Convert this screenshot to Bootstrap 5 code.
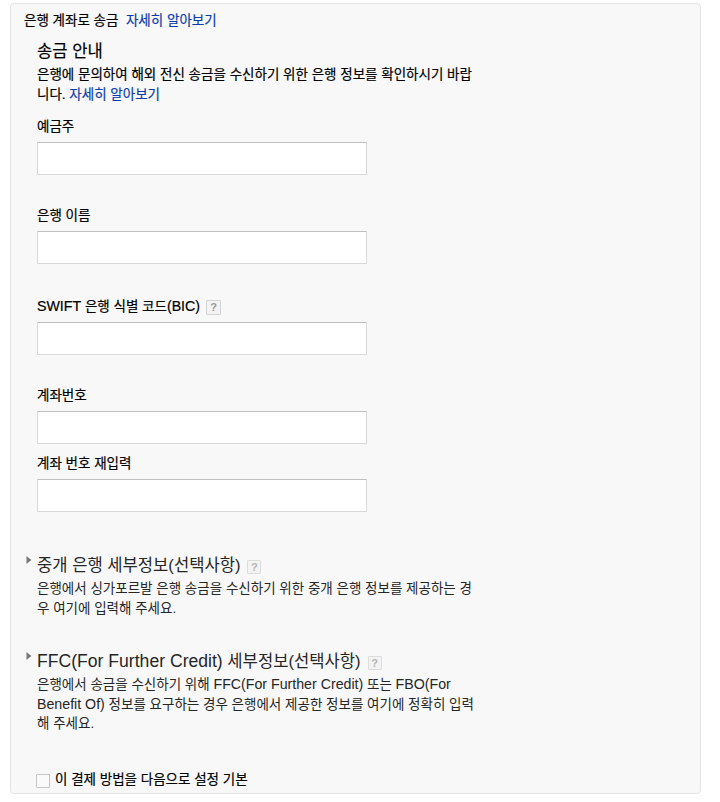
<!DOCTYPE html>
<html lang="ko">
<head>
<meta charset="utf-8">
<meta name="viewport" content="width=device-width, initial-scale=1">
<title>은행 계좌로 송금</title>
<link href="https://cdn.jsdelivr.net/npm/bootstrap@5.3.0/dist/css/bootstrap.min.css" rel="stylesheet">
<style>
body{background:#fff;color:#000;font-family:"Liberation Sans","Noto Sans CJK KR",sans-serif;font-size:13.5px;line-height:20px;-webkit-text-stroke:.2px}
.panel{margin:3px 19px 0 10px;height:791px;background:#f8f8f8;border:1px solid #e4e4e4;border-radius:4px;padding:7px 13px 0;white-space:nowrap}
.panel a{color:#0b3cae;text-decoration:none}
.inner{padding-left:13px}
.title{font-size:16.6px;line-height:22px;margin:0;font-weight:400;color:inherit}
.inner .title{margin-top:10px}
.intro{padding:2px 0 12px;margin:0}
.latin{font-size:14.2px;line-height:0}
.title .latin{font-size:17.6px}
.field{margin-bottom:31px}
.field label{display:flex;align-items:center;height:20px;margin-bottom:5px}
.field .form-control{width:329.5px;height:33px;border:1px solid #d9d9d9;border-top-color:#bfbfbf;border-radius:1px;background:#fff;box-shadow:none;padding:4px 8px}
.field-swift{padding-top:2px}
.field-account{margin-bottom:10px}
.field-last{margin-bottom:42px}
.soft{color:#262626;-webkit-text-stroke:0}
.soft .title{padding-top:1px}
.help{display:inline-flex;align-items:center;justify-content:center;width:15px;height:15px;border:1px solid #d4d4d4;border-radius:1px;background:#f3f3f3;color:#999;font-size:11px;line-height:13px;font-weight:700;margin-left:6px;-webkit-text-stroke:0}
.soft .help{width:14px;height:14px;color:#b5b5b5;border-color:#dcdcdc;margin-top:2px;margin-left:7px}
.note{padding-top:2px;margin-bottom:31px}
.note-ffc{line-height:19.7px;margin-bottom:36px}
.arrow{width:13px;flex:none;padding:2px 0 0 2px;line-height:0}
.panel .form-check-input{width:14px;height:14px;margin:2px 5px 0 0;border:1px solid #c6c6c6;border-radius:1px;background-color:#fafafa;float:none}
.default-row{padding-left:12px}
</style>
<script src="https://cdn.jsdelivr.net/npm/bootstrap@5.3.0/dist/js/bootstrap.bundle.min.js"></script>
</head>
<body>
<main class="panel">
  <div>은행 계좌로 송금&nbsp; <a href="#">자세히 알아보기</a></div>
  <div class="inner">
    <h2 class="title">송금 안내</h2>
    <p class="intro">은행에 문의하여 해외 전신 송금을 수신하기 위한 은행 정보를 확인하시기 바랍<br>니다. <a href="#">자세히 알아보기</a></p>
    <div class="field"><label for="f1">예금주</label><input class="form-control" id="f1"></div>
    <div class="field"><label for="f2">은행 이름</label><input class="form-control" id="f2"></div>
    <div class="field field-swift"><label for="f3"><span><span class="latin">SWIFT</span> 은행 식별 코드<span class="latin">(BIC)</span></span><span class="help">?</span></label><input class="form-control" id="f3"></div>
    <div class="field field-account"><label for="f4">계좌번호</label><input class="form-control" id="f4"></div>
    <div class="field field-last"><label for="f5">계좌 번호 재입력</label><input class="form-control" id="f5"></div>
  </div>
  <section class="d-flex soft">
    <div class="arrow"><svg width="6" height="8" viewBox="0 0 6 8"><path d="M.5 0L5.3 4L.5 8Z" fill="#777"/></svg></div>
    <div>
      <h3 class="title d-flex align-items-center">중개 은행 세부정보(선택사항)<span class="help">?</span></h3>
      <p class="note">은행에서 싱가포르발 은행 송금을 수신하기 위한 중개 은행 정보를 제공하는 경<br>우 여기에 입력해 주세요.</p>
    </div>
  </section>
  <section class="d-flex soft">
    <div class="arrow"><svg width="6" height="8" viewBox="0 0 6 8"><path d="M.5 0L5.3 4L.5 8Z" fill="#777"/></svg></div>
    <div>
      <h3 class="title d-flex align-items-center"><span><span class="latin">FFC(For Further Credit)</span> 세부정보(선택사항)</span><span class="help">?</span></h3>
      <p class="note note-ffc">은행에서 송금을 수신하기 위해 <span class="latin">FFC(For Further Credit)</span> 또는 <span class="latin">FBO(For</span><br><span class="latin">Benefit Of)</span> 정보를 요구하는 경우 은행에서 제공한 정보를 여기에 정확히 입력<br>해 주세요.</p>
    </div>
  </section>
  <div class="d-flex align-items-center default-row"><input class="form-check-input" type="checkbox" id="def"><label for="def">이 결제 방법을 다음으로 설정 기본</label></div>
</main>
</body>
</html>
